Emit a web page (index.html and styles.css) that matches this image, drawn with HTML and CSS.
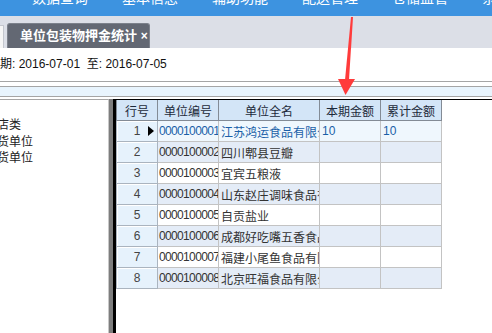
FILE: index.html
```html
<!DOCTYPE html>
<html lang="zh-CN">
<head>
  <meta charset="UTF-8" />
  <title>单位包装物押金统计</title>
  <link rel="stylesheet" href="styles.css">
</head>
<body>
  <div class="topbar">
    <div class="menu">
      <span>数据查询</span>
      <span>基本信息</span>
      <span>辅助功能</span>
      <span>配送管理</span>
      <span>仓储监管</span>
      <span>系统</span>
    </div>
  </div>

  <div class="tabbar">
    <div class="tab-stub"></div>
    <div class="tab">单位包装物押金统计 <span class="close">×</span></div>
  </div>

  <div class="query">期: 2016-07-01&nbsp; 至: 2016-07-05</div>

  <div class="sep"></div>
  <div class="strip"></div>

  <div class="content">
    <div class="left">
      <div class="node">店类</div>
      <div class="node">货单位</div>
      <div class="node">货单位</div>
    </div>
    <div class="splitter"></div>
    <div class="grid">
      <table>
        <colgroup>
          <col style="width: 41px">
          <col style="width: 61px">
          <col style="width: 101px">
          <col style="width: 61px">
          <col style="width: 61px">
        </colgroup>
        <thead>
          <tr>
            <th>行号</th>
            <th>单位编号</th>
            <th>单位全名</th>
            <th>本期金额</th>
            <th>累计金额</th>
          </tr>
        </thead>
        <tbody>
          <tr class="current">
            <td class="no">1<span class="pointer"></span></td>
            <td class="code">0000100001</td>
            <td>江苏鸿运食品有限公司</td>
            <td>10</td>
            <td>10</td>
          </tr>
          <tr class="alt">
            <td class="no">2</td>
            <td class="code">0000100002</td>
            <td>四川郫县豆瓣</td>
            <td></td>
            <td></td>
          </tr>
          <tr>
            <td class="no">3</td>
            <td class="code">0000100003</td>
            <td>宜宾五粮液</td>
            <td></td>
            <td></td>
          </tr>
          <tr class="alt">
            <td class="no">4</td>
            <td class="code">0000100004</td>
            <td>山东赵庄调味食品有限公司</td>
            <td></td>
            <td></td>
          </tr>
          <tr>
            <td class="no">5</td>
            <td class="code">0000100005</td>
            <td>自贡盐业</td>
            <td></td>
            <td></td>
          </tr>
          <tr class="alt">
            <td class="no">6</td>
            <td class="code">0000100006</td>
            <td>成都好吃嘴五香食品</td>
            <td></td>
            <td></td>
          </tr>
          <tr>
            <td class="no">7</td>
            <td class="code">0000100007</td>
            <td>福建小尾鱼食品有限公司</td>
            <td></td>
            <td></td>
          </tr>
          <tr class="alt">
            <td class="no">8</td>
            <td class="code">0000100008</td>
            <td>北京旺福食品有限公司</td>
            <td></td>
            <td></td>
          </tr>
        </tbody>
      </table>
    </div>
  </div>

  <!-- 红色标注箭头 -->
  <svg class="arrow" width="492" height="333" viewBox="0 0 492 333">
    <polygon points="351,17 353,17 349,80 345,80" fill="#ff3b3b" />
    <polygon points="338,79 355,79 345.5,95" fill="#ff3b3b" />
  </svg>
</body>
</html>
```

FILE: styles.css
```css
body {
  font-family: "Liberation Sans", "Noto Sans CJK SC", sans-serif;
  font-size: 12px;
  margin: 0;
  width: 492px;
  height: 333px;
  overflow: hidden;
  background: #fff;
  color: #333;
  position: relative;
}

.topbar {
  height: 16px;
  background: #3d93e0;
  overflow: hidden;
}

.menu {
  display: flex;
  margin-left: 32px;
  margin-top: -10px;
}

.menu span {
  width: 90px;
  flex: none;
  color: #fff;
  font-size: 14px;
  line-height: 16px;
}

.tabbar {
  height: 32px;
  background: #dcdfe7;
  box-sizing: border-box;
  padding-top: 7px;
  display: flex;
  align-items: flex-end;
}

.tab-stub {
  width: 4px;
  height: 23px;
  background: #f6f6f6;
  border: 1px solid #c4c7ce;
  border-left: none;
  border-bottom: none;
  box-sizing: border-box;
}

.tab {
  margin-left: 3px;
  width: 143px;
  height: 25px;
  box-sizing: border-box;
  background: #636873;
  border: 1px solid #7c818b;
  border-bottom: none;
  border-radius: 3px 3px 0 0;
  color: #fff;
  font-weight: bold;
  font-size: 13px;
  line-height: 24px;
  padding-left: 12px;
  white-space: nowrap;
}

.tab .close {
  font-size: 12px;
}

.query {
  height: 33px;
  box-sizing: border-box;
  padding-top: 8px;
  line-height: 16px;
  color: #111;
  white-space: nowrap;
}

.sep {
  height: 4px;
  border-top: 1px solid #a5a5a5;
}

.strip {
  height: 9px;
  background: #e8f4fd;
  border-top: 1px solid #a5a5a5;
  border-bottom: 1px solid #a5a5a5;
}

.content {
  display: flex;
  margin-top: 2px;
  height: 240px;
}

.left {
  width: 109px;
  box-sizing: border-box;
  border-top: 1px solid #a5a5a5;
  border-right: 1px solid #c8c8c8;
  padding-top: 17px;
  overflow: hidden;
}

.node {
  line-height: 16.5px;
  margin-left: -3px;
  white-space: nowrap;
  color: #222;
}

.splitter {
  width: 4px;
  background: #7d7d7d;
}

.grid {
  flex: 1;
  border-left: 3px solid #000;
  border-top: 1px solid #000;
  background: #fff;
}

table {
  border-collapse: collapse;
  table-layout: fixed;
  width: 325px;
}

th {
  height: 20px;
  padding: 0;
  background: #d3e5f7;
  border: 1px solid #838b95;
  border-top: none;
  font-weight: normal;
  color: #1d2a3a;
  text-align: center;
  white-space: nowrap;
  overflow: hidden;
}

td {
  height: 20px;
  padding: 0 0 0 2px;
  border: 1px solid #c3c3c3;
  white-space: nowrap;
  overflow: hidden;
  color: #333;
}

td.code {
  padding-left: 1px;
  letter-spacing: -0.65px;
}

tr.alt td {
  background: #e4ecf7;
}

tr.current td {
  background: #eff7fd;
  color: #1a5fa8;
}

td.no,
tr.alt td.no,
tr.current td.no {
  background: #e6f2fc;
  color: #444;
  text-align: center;
  padding: 0;
  border-color: #aab4bf;
  box-shadow: inset 1px 1px 0 #fff;
  position: relative;
}

.pointer {
  position: absolute;
  right: 3px;
  top: 5px;
  width: 0;
  height: 0;
  border-top: 5px solid transparent;
  border-bottom: 5px solid transparent;
  border-left: 6px solid #000;
}

.arrow {
  position: absolute;
  left: 0;
  top: 0;
  pointer-events: none;
}
```
